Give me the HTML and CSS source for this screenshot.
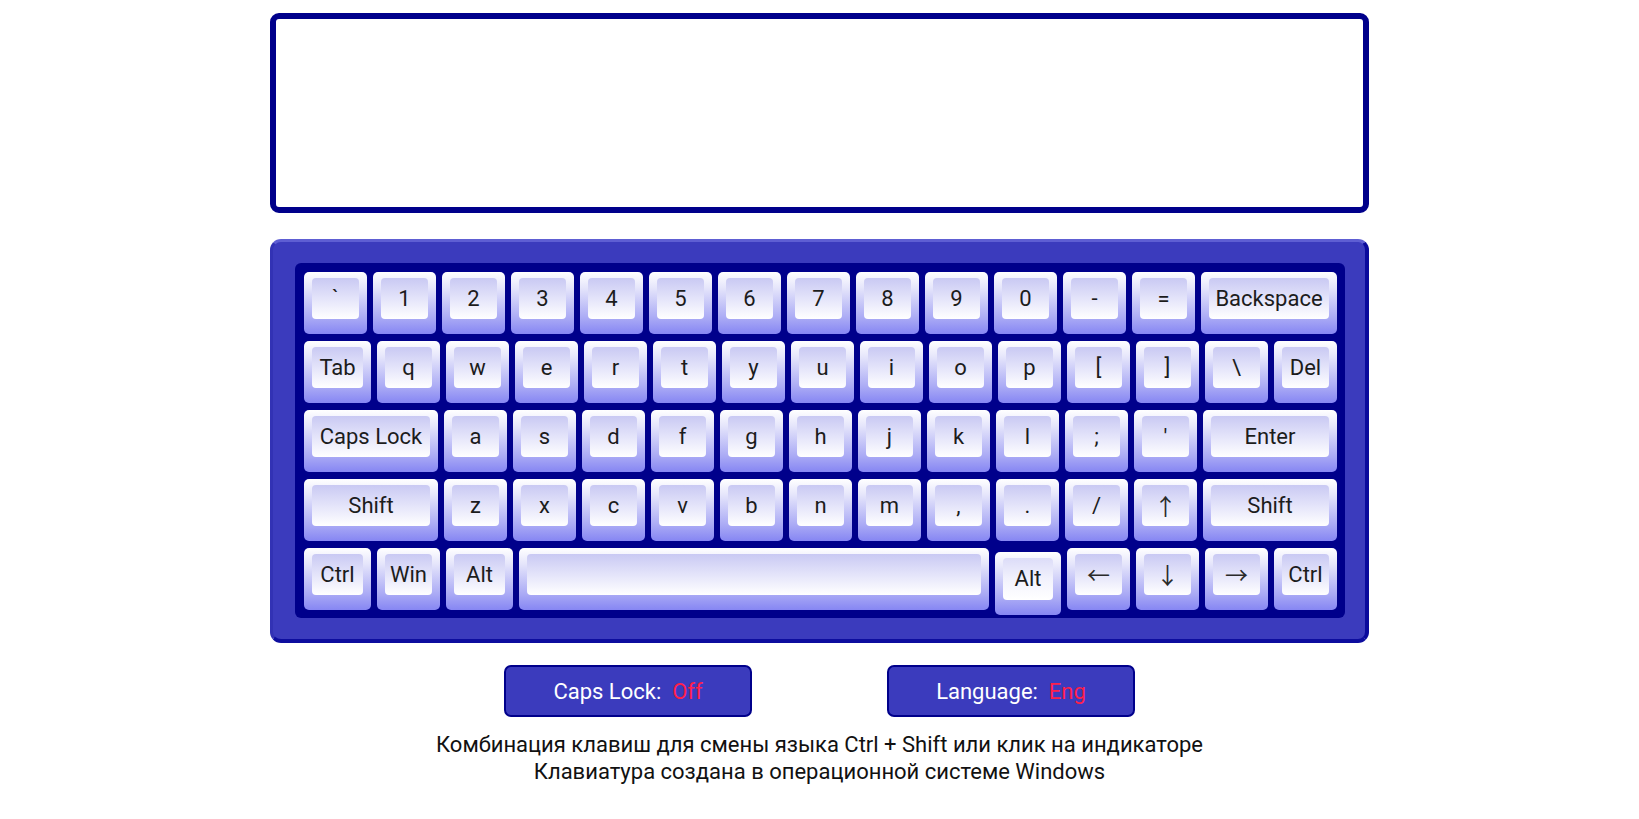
FILE: index.html
```html
<!DOCTYPE html>
<html lang="ru">
<head>
<meta charset="utf-8">
<title>Virtual Keyboard</title>
<link rel="stylesheet" href="styles.css">
</head>
<body>
<main class="wrap">
  <textarea class="screen"></textarea>
  <section class="keyboard">
    <div class="keys">
      <div class="row">
        <div class="key"><span class="cap">`</span></div>
        <div class="key"><span class="cap">1</span></div>
        <div class="key"><span class="cap">2</span></div>
        <div class="key"><span class="cap">3</span></div>
        <div class="key"><span class="cap">4</span></div>
        <div class="key"><span class="cap">5</span></div>
        <div class="key"><span class="cap">6</span></div>
        <div class="key"><span class="cap">7</span></div>
        <div class="key"><span class="cap">8</span></div>
        <div class="key"><span class="cap">9</span></div>
        <div class="key"><span class="cap">0</span></div>
        <div class="key"><span class="cap">-</span></div>
        <div class="key"><span class="cap">=</span></div>
        <div class="key grow"><span class="cap">Backspace</span></div>
      </div>
      <div class="row">
        <div class="key grow"><span class="cap">Tab</span></div>
        <div class="key"><span class="cap">q</span></div>
        <div class="key"><span class="cap">w</span></div>
        <div class="key"><span class="cap">e</span></div>
        <div class="key"><span class="cap">r</span></div>
        <div class="key"><span class="cap">t</span></div>
        <div class="key"><span class="cap">y</span></div>
        <div class="key"><span class="cap">u</span></div>
        <div class="key"><span class="cap">i</span></div>
        <div class="key"><span class="cap">o</span></div>
        <div class="key"><span class="cap">p</span></div>
        <div class="key"><span class="cap">[</span></div>
        <div class="key"><span class="cap">]</span></div>
        <div class="key"><span class="cap">\</span></div>
        <div class="key"><span class="cap">Del</span></div>
      </div>
      <div class="row">
        <div class="key grow"><span class="cap">Caps Lock</span></div>
        <div class="key"><span class="cap">a</span></div>
        <div class="key"><span class="cap">s</span></div>
        <div class="key"><span class="cap">d</span></div>
        <div class="key"><span class="cap">f</span></div>
        <div class="key"><span class="cap">g</span></div>
        <div class="key"><span class="cap">h</span></div>
        <div class="key"><span class="cap">j</span></div>
        <div class="key"><span class="cap">k</span></div>
        <div class="key"><span class="cap">l</span></div>
        <div class="key"><span class="cap">;</span></div>
        <div class="key"><span class="cap">'</span></div>
        <div class="key grow"><span class="cap">Enter</span></div>
      </div>
      <div class="row">
        <div class="key grow"><span class="cap">Shift</span></div>
        <div class="key"><span class="cap">z</span></div>
        <div class="key"><span class="cap">x</span></div>
        <div class="key"><span class="cap">c</span></div>
        <div class="key"><span class="cap">v</span></div>
        <div class="key"><span class="cap">b</span></div>
        <div class="key"><span class="cap">n</span></div>
        <div class="key"><span class="cap">m</span></div>
        <div class="key"><span class="cap">,</span></div>
        <div class="key"><span class="cap">.</span></div>
        <div class="key"><span class="cap">/</span></div>
        <div class="key"><span class="cap arrow">↑</span></div>
        <div class="key grow"><span class="cap">Shift</span></div>
      </div>
      <div class="row">
        <div class="key mod"><span class="cap">Ctrl</span></div>
        <div class="key"><span class="cap">Win</span></div>
        <div class="key mod"><span class="cap">Alt</span></div>
        <div class="key grow space"><span class="cap"></span></div>
        <div class="key alt-r pressed"><span class="cap">Alt</span></div>
        <div class="key"><span class="cap arrow">←</span></div>
        <div class="key"><span class="cap arrow">↓</span></div>
        <div class="key"><span class="cap arrow">→</span></div>
        <div class="key"><span class="cap">Ctrl</span></div>
      </div>
    </div>
  </section>
  <div class="status">
    <div class="indicator">Caps Lock:&nbsp;&nbsp;<span class="state">Off</span></div>
    <div class="indicator">Language:&nbsp;&nbsp;<span class="state">Eng</span></div>
  </div>
  <p class="note">Комбинация клавиш для смены языка Ctrl + Shift или клик на индикаторе<br>Клавиатура создана в операционной системе Windows</p>
</main>
</body>
</html>
```

FILE: styles.css
```css
* { box-sizing: border-box; }

html, body {
  margin: 0;
  padding: 0;
  background: #ffffff;
  font-family: Roboto, "Noto Sans", sans-serif;
}

.wrap {
  width: 1099px;
  margin: 0 auto;
  padding-top: 13px;
  display: flex;
  flex-direction: column;
  align-items: stretch;
}

.screen {
  display: block;
  width: 100%;
  height: 200px;
  border: 6px solid #00008b;
  border-radius: 9px;
  background: #fff;
  resize: none;
  outline: none;
  margin: 0;
}

.keyboard {
  margin-top: 26px;
  height: 404px;
  background: #3b3bbd;
  border-top: 3px solid #5e5ed3;
  border-left: 3px solid #3232b4;
  border-right: 4px solid #0a0a9c;
  border-bottom: 4px solid #0d0d9e;
  border-radius: 11px;
  padding: 21px 20px 21px 22px;
}

.keys {
  background: #00008b;
  border-radius: 6px;
  padding: 9px 8px 8px 9px;
  display: flex;
  flex-direction: column;
  gap: 7px;
}

.row {
  display: flex;
  gap: 6px;
  height: 62px;
}

.key {
  width: 63px;
  height: 62px;
  flex: 0 0 auto;
  border-radius: 5px;
  background: linear-gradient(to bottom, #ffffff 0%, #e6e6fb 25%, #a9a9f5 75%, #8686f3 100%);
  padding: 6px 8px 15px 8px;
  display: flex;
}

.key.mod { width: 67px; }
.key.alt-r { width: 66px; }
.key.grow { flex: 1 1 0; width: auto; }

.key.pressed {
  transform: translateY(4px);
  height: 63px;
}

.cap {
  flex: 1;
  border-radius: 4px;
  background: linear-gradient(to bottom, #c9c9f3 0%, #e4e4fa 50%, #ffffff 100%);
  display: flex;
  align-items: center;
  justify-content: center;
  font-size: 22px;
  color: #1c1c1c;
  line-height: 1;
  white-space: nowrap;
}

.pressed .cap {
  background: linear-gradient(to bottom, #dcdcf8 0%, #f2f2fd 50%, #ffffff 100%);
}

.cap.arrow {
  font-family: "Noto Sans CJK JP", "DejaVu Sans", sans-serif;
  font-size: 23px;
  color: #2a2a2a;
}

.status {
  margin-top: 22px;
  display: flex;
  justify-content: center;
  gap: 135px;
}

.indicator {
  width: 248px;
  height: 52px;
  background: #3b3bbd;
  border: 2px solid #00008b;
  border-radius: 7px;
  color: #ffffff;
  font-size: 22px;
  display: flex;
  align-items: center;
  justify-content: center;
}

.state { color: #ff1f4b; }

.note {
  margin: 14px 0 0 0;
  text-align: center;
  font-size: 22px;
  line-height: 27px;
  color: #111111;
}
```
